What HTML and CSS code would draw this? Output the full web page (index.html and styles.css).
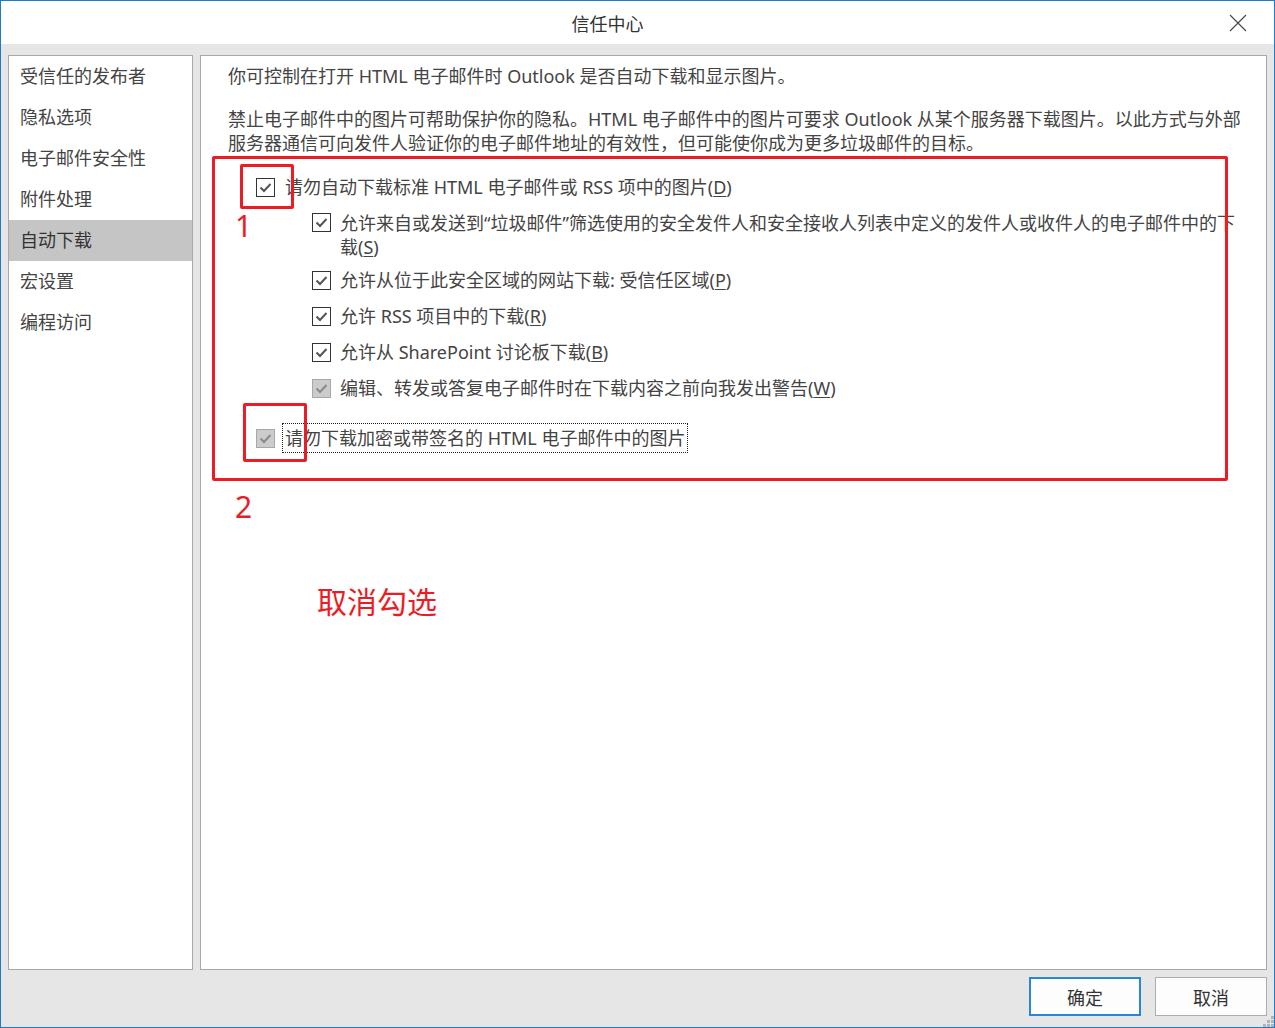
FILE: index.html
```html
<!DOCTYPE html>
<html lang="zh-CN">
<head>
<meta charset="utf-8">
<title>信任中心</title>
<link rel="stylesheet" href="styles.css">
</head>
<body>
<div class="window">
  <div class="titlebar">
    <div class="title">信任中心</div>
    <div class="close">
      <svg width="18" height="18" viewBox="0 0 18 18"><path d="M1 1 L17 17 M17 1 L1 17" stroke="#444" stroke-width="1.1" fill="none"/></svg>
    </div>
  </div>
  <div class="body">
    <div class="panels">
      <ul class="nav">
        <li>受信任的发布者</li>
        <li>隐私选项</li>
        <li>电子邮件安全性</li>
        <li>附件处理</li>
        <li class="active">自动下载</li>
        <li>宏设置</li>
        <li>编程访问</li>
      </ul>
      <div class="content">
        <p class="intro">你可控制在打开 HTML 电子邮件时 Outlook 是否自动下载和显示图片。</p>
        <p class="desc">禁止电子邮件中的图片可帮助保护你的隐私。HTML 电子邮件中的图片可要求 Outlook 从某个服务器下载图片。以此方式与外部<br>服务器通信可向发件人验证你的电子邮件地址的有效性，但可能使你成为更多垃圾邮件的目标。</p>

        <div class="opt main first">
          <span class="cb"><svg viewBox="0 0 17 17"><path d="M3.5 8.5 L7 12 L13.5 5" /></svg></span>
          <span class="lbl">请勿自动下载标准 HTML 电子邮件或 RSS 项中的图片(<u>D</u>)</span>
        </div>
        <div class="opt sub wrap">
          <span class="cb"><svg viewBox="0 0 17 17"><path d="M3.5 8.5 L7 12 L13.5 5" /></svg></span>
          <span class="lbl">允许来自或发送到“垃圾邮件”筛选使用的安全发件人和安全接收人列表中定义的发件人或收件人的电子邮件中的下<br>载(<u>S</u>)</span>
        </div>
        <div class="opt sub after-wrap">
          <span class="cb"><svg viewBox="0 0 17 17"><path d="M3.5 8.5 L7 12 L13.5 5" /></svg></span>
          <span class="lbl">允许从位于此安全区域的网站下载: 受信任区域(<u>P</u>)</span>
        </div>
        <div class="opt sub">
          <span class="cb"><svg viewBox="0 0 17 17"><path d="M3.5 8.5 L7 12 L13.5 5" /></svg></span>
          <span class="lbl">允许 RSS 项目中的下载(<u>R</u>)</span>
        </div>
        <div class="opt sub">
          <span class="cb"><svg viewBox="0 0 17 17"><path d="M3.5 8.5 L7 12 L13.5 5" /></svg></span>
          <span class="lbl">允许从 SharePoint 讨论板下载(<u>B</u>)</span>
        </div>
        <div class="opt sub">
          <span class="cb disabled"><svg viewBox="0 0 17 17"><path d="M3.5 8.5 L7 12 L13.5 5" /></svg></span>
          <span class="lbl">编辑、转发或答复电子邮件时在下载内容之前向我发出警告(<u>W</u>)</span>
        </div>
        <div class="opt main last">
          <span class="cb disabled"><svg viewBox="0 0 17 17"><path d="M3.5 8.5 L7 12 L13.5 5" /></svg></span>
          <span class="lbl focus">请勿下载加密或带签名的 HTML 电子邮件中的图片</span>
        </div>

        <div class="mark box-all"></div>
        <div class="mark box-1"></div>
        <div class="mark box-2"></div>
        <div class="note n1">1</div>
        <div class="note n2">2</div>
        <div class="note n3">取消勾选</div>
      </div>
    </div>
    <div class="buttons">
      <button class="btn primary">确定</button>
      <button class="btn">取消</button>
    </div>
    <svg class="grip" width="11" height="11" viewBox="0 0 11 11">
      <rect x="8" y="0" width="3" height="3" fill="#b4b4b4"/>
      <rect x="4" y="4" width="3" height="3" fill="#b4b4b4"/>
      <rect x="8" y="4" width="3" height="3" fill="#b4b4b4"/>
      <rect x="0" y="8" width="3" height="3" fill="#b4b4b4"/>
      <rect x="4" y="8" width="3" height="3" fill="#b4b4b4"/>
      <rect x="8" y="8" width="3" height="3" fill="#b4b4b4"/>
    </svg>
  </div>
</div>
</body>
</html>
```

FILE: styles.css
```css
* { box-sizing: border-box; }
html, body { margin: 0; padding: 0; background: #fff; }
body {
  font-family: "Noto Sans", "Noto Sans CJK SC", sans-serif;
  font-size: 18px;
  color: #444;
}
.window {
  width: 1275px;
  height: 1028px;
  border: 1px solid #1a7bd2;
  display: flex;
  flex-direction: column;
  background: #e6e6e6;
}
.titlebar {
  height: 43px;
  background: #fff;
  display: flex;
  align-items: center;
  flex: none;
}
.title {
  flex: 1;
  text-align: center;
  color: #333;
  font-size: 18px;
}
.close {
  width: 60px;
  height: 43px;
  display: flex;
  align-items: center;
  justify-content: center;
  padding-right: 12px;
}
.body {
  flex: 1;
  position: relative;
  padding: 11px 7px;
  display: flex;
  flex-direction: column;
}
.panels {
  display: flex;
  gap: 7px;
  height: 915px;
  flex: none;
}
.nav {
  list-style: none;
  margin: 0;
  padding: 0;
  width: 185px;
  background: #fff;
  border: 1px solid #a8a8a8;
}
.nav li {
  height: 41px;
  line-height: 41px;
  padding-left: 11px;
  color: #444;
}
.nav li.active { background: #c5c5c5; color: #333; }
.content {
  flex: 1;
  position: relative;
  background: #fff;
  border: 1px solid #a8a8a8;
  padding: 8px 10px 0 27px;
  white-space: nowrap;
}
.content p { margin: 0; line-height: 24px; }
.content .desc { margin-top: 19px; }
.opt {
  display: flex;
  align-items: center;
  line-height: 24px;
  margin-top: 12px;
}
.opt.main { margin-left: 28px; }
.opt.first { margin-top: 20px; }
.opt.sub { margin-left: 84px; }
.opt.wrap { align-items: flex-start; }
.opt.wrap .cb { margin-top: 2px; }
.opt.after-wrap { margin-top: 9px; }
.opt.last { margin-top: 23px; }
.cb {
  width: 19px;
  height: 19px;
  border: 1px solid #333;
  background: #fff;
  flex: none;
  display: flex;
}
.cb svg { width: 17px; height: 17px; }
.cb path { stroke: #555; stroke-width: 2; fill: none; }
.cb.disabled { background: #cccccc; border-color: #a8a8a8; }
.cb.disabled path { stroke: #8a8a8a; }
.opt.main .lbl { margin-left: 10px; }
.opt.sub .lbl { margin-left: 9px; }
.lbl u { text-decoration: underline; text-underline-offset: 2px; }
.opt .lbl.focus {
  margin-left: 7px;
  border: 1px dotted #222;
  padding: 2px;
}
.mark {
  position: absolute;
  border: 3px solid #ec1c24;
  border-radius: 2px;
}
.box-all { left: 11px; top: 100px; width: 1016px; height: 325px; }
.box-1 { left: 39px; top: 108px; width: 54px; height: 45px; }
.box-2 { left: 42px; top: 347px; width: 64px; height: 59px; }
.note {
  position: absolute;
  color: #ec1c24;
  font-size: 30px;
  line-height: 30px;
}
.n1 { left: 34px; top: 155px; }
.n2 { left: 34px; top: 436px; }
.n3 { left: 116px; top: 529px; font-family: "Noto Sans CJK SC", sans-serif; }
.buttons {
  display: flex;
  justify-content: flex-end;
  gap: 14px;
  margin-top: 7px;
}
.btn {
  width: 112px;
  height: 39px;
  background: #fdfdfd;
  border: 1px solid #adadad;
  font-family: "Noto Sans CJK SC", sans-serif;
  font-size: 18px;
  color: #333;
  padding: 0;
}
.btn.primary { border: 2px solid #2a86d6; }
.grip { position: absolute; right: 0; bottom: 0; }
```
